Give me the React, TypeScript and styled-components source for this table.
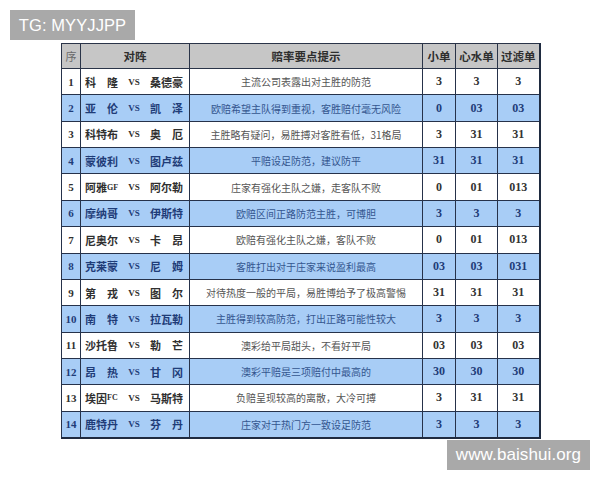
import React from "react";
import styled, { createGlobalStyle } from "styled-components";

const Global = createGlobalStyle`
  html, body { margin: 0; padding: 0; background: #ffffff; }
  body { width: 600px; height: 480px; overflow: hidden; position: relative; }
`;

const Page = styled.div`
  position: relative;
  width: 600px;
  height: 480px;
  padding: 43px 0 0 61px;
  box-sizing: border-box;
`;

const Watermark = styled.div<{ $top: number; $left: number; $w: number; $fs: number }>`
  position: absolute;
  top: ${(p) => p.$top}px;
  left: ${(p) => p.$left}px;
  width: ${(p) => p.$w}px;
  height: 30px;
  background: #a9a9a9;
  color: #ffffff;
  font-family: "Liberation Sans", Arial, sans-serif;
  font-size: ${(p) => p.$fs}px;
  line-height: 30px;
  text-align: center;
  letter-spacing: 0.1px;
`;

const Table = styled.table`
  border-collapse: collapse;
  table-layout: fixed;
  width: 478px;
  border: 1px solid #1f2b40;
  border-right-width: 2px;
  border-bottom-width: 2px;
  font-family: "Noto Sans CJK SC", "Noto Sans", sans-serif;
`;

const Col = styled.col<{ $w: number }>`
  width: ${(p) => p.$w}px;
`;

const HeadRow = styled.tr`
  height: 25px;
  background: #c6c6c6;
`;

const Th = styled.th<{ $light?: boolean }>`
  border: 1px solid #2a3448;
  padding: 0;
  font-size: ${(p) => (p.$light ? 11 : 11.5)}px;
  font-weight: ${(p) => (p.$light ? 400 : 700)};
  color: ${(p) => (p.$light ? "#6a6a6a" : "#2e2e2e")};
  text-align: center;
  vertical-align: middle;
  white-space: nowrap;
`;

const Row = styled.tr<{ $blue: boolean }>`
  height: 26.36px;
  background: ${(p) => (p.$blue ? "#a8cdf6" : "#ffffff")};
`;

const Cell = styled.td<{ $blue: boolean }>`
  border: 1px solid #26324a;
  padding: 0;
  vertical-align: middle;
  white-space: nowrap;
  overflow: hidden;
  color: ${(p) => (p.$blue ? "#1f3c78" : "#2f2f2f")};
`;

const SeqCell = styled(Cell)`
  text-align: center;
  font-family: "Liberation Serif", "Times New Roman", serif;
  font-weight: 700;
  font-size: 11px;
`;

const MatchCell = styled(Cell)``;

const MatchInner = styled.div`
  display: flex;
  align-items: center;
  justify-content: space-between;
  padding: 0 6px 0 4px;
  font-weight: 700;
  font-size: 11px;
`;

const Team = styled.span<{ $start?: boolean }>`
  display: flex;
  align-items: center;
  justify-content: ${(p) => (p.$start ? "flex-start" : "space-between")};
  width: 33px;
  font-family: "Noto Sans CJK SC", sans-serif;
`;

const Latin = styled.span`
  font-family: "Liberation Serif", serif;
  font-size: 8px;
  font-weight: 700;
  line-height: 1;
  margin-top: 1px;
`;

const Vs = styled.span`
  font-family: "Liberation Serif", "Times New Roman", serif;
  font-size: 9px;
  font-weight: 700;
`;

const TipCell = styled(Cell)`
  text-align: center;
  font-size: 10px;
  font-weight: 400;
  color: ${(p) => (p.$blue ? "#34568f" : "#555555")};
`;

const NumCell = styled(Cell)`
  text-align: center;
  font-family: "Liberation Serif", "Times New Roman", serif;
  font-weight: 700;
  font-size: 12px;
  color: ${(p) => (p.$blue ? "#1f3c78" : "#333333")};
`;

type Match = {
  home: string;
  away: string;
  tip: string;
  a: string;
  b: string;
  c: string;
};

const data: Match[] = [
  { home: "科隆", away: "桑德豪", tip: "主流公司表露出对主胜的防范", a: "3", b: "3", c: "3" },
  { home: "亚伦", away: "凯泽", tip: "欧赔希望主队得到重视，客胜赔付毫无风险", a: "0", b: "03", c: "03" },
  { home: "科特布", away: "奥厄", tip: "主胜略有疑问，易胜搏对客胜看低，31格局", a: "3", b: "31", c: "31" },
  { home: "蒙彼利", away: "图卢兹", tip: "平赔设足防范，建议防平", a: "31", b: "31", c: "31" },
  { home: "阿雅GF", away: "阿尔勒", tip: "庄家有强化主队之嫌，走客队不败", a: "0", b: "01", c: "013" },
  { home: "摩纳哥", away: "伊斯特", tip: "欧赔区间正路防范主胜，可博胆", a: "3", b: "3", c: "3" },
  { home: "尼奥尔", away: "卡昂", tip: "欧赔有强化主队之嫌，客队不败", a: "0", b: "01", c: "013" },
  { home: "克莱蒙", away: "尼姆", tip: "客胜打出对于庄家来说盈利最高", a: "03", b: "03", c: "031" },
  { home: "第戎", away: "图尔", tip: "对待热度一般的平局，易胜博给予了极高警惕", a: "31", b: "31", c: "31" },
  { home: "南特", away: "拉瓦勒", tip: "主胜得到较高防范，打出正路可能性较大", a: "3", b: "3", c: "3" },
  { home: "沙托鲁", away: "勒芒", tip: "澳彩给平局甜头，不看好平局", a: "03", b: "03", c: "03" },
  { home: "昂热", away: "甘冈", tip: "澳彩平赔是三项赔付中最高的", a: "30", b: "30", c: "30" },
  { home: "埃因FC", away: "马斯特", tip: "负赔呈现较高的离散，大冷可搏", a: "3", b: "31", c: "31" },
  { home: "鹿特丹", away: "芬丹", tip: "庄家对于热门方一致设足防范", a: "3", b: "3", c: "3" },
];

function TeamName({ name }: { name: string }) {
  const m = name.match(/^(.*?)([A-Z]+)$/);
  if (m) {
    return (
      <Team $start>
        {m[1]}
        <Latin>{m[2]}</Latin>
      </Team>
    );
  }
  const chars = Array.from(name);
  return (
    <Team>
      {chars.map((ch, i) => (
        <span key={i}>{ch}</span>
      ))}
    </Team>
  );
}

export default function App() {
  return (
    <>
      <Global />
      <Page>
        <Table>
          <colgroup>
            <Col $w={19} />
            <Col $w={109} />
            <Col $w={233} />
            <Col $w={33} />
            <Col $w={42} />
            <Col $w={42} />
          </colgroup>
          <thead>
            <HeadRow>
              <Th $light>序</Th>
              <Th>对阵</Th>
              <Th>赔率要点提示</Th>
              <Th>小单</Th>
              <Th>心水单</Th>
              <Th>过滤单</Th>
            </HeadRow>
          </thead>
          <tbody>
            {data.map((d, i) => {
              const blue = i % 2 === 1;
              return (
                <Row key={i} $blue={blue}>
                  <SeqCell $blue={blue}>{i + 1}</SeqCell>
                  <MatchCell $blue={blue}>
                    <MatchInner>
                      <TeamName name={d.home} />
                      <Vs>VS</Vs>
                      <TeamName name={d.away} />
                    </MatchInner>
                  </MatchCell>
                  <TipCell $blue={blue}>{d.tip}</TipCell>
                  <NumCell $blue={blue}>{d.a}</NumCell>
                  <NumCell $blue={blue}>{d.b}</NumCell>
                  <NumCell $blue={blue}>{d.c}</NumCell>
                </Row>
              );
            })}
          </tbody>
        </Table>
        <Watermark $top={10} $left={10} $w={125} $fs={16.5}>
          TG: MYYJJPP
        </Watermark>
        <Watermark $top={440} $left={447} $w={143} $fs={17}>
          www.baishui.org
        </Watermark>
      </Page>
    </>
  );
}
